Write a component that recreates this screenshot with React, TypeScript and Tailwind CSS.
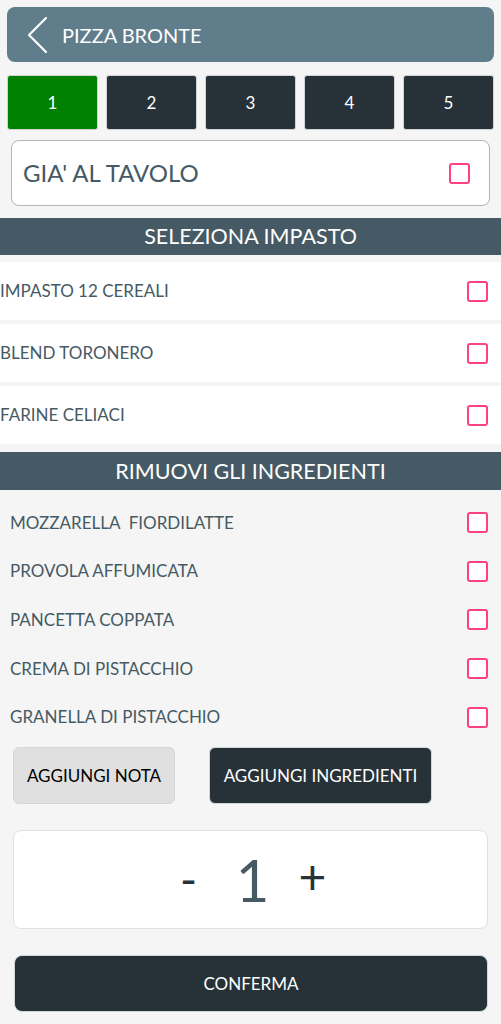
const impasti = ["IMPASTO 12 CEREALI", "BLEND TORONERO", "FARINE CELIACI"];
const ingredienti = [
    "MOZZARELLA  FIORDILATTE",
    "PROVOLA AFFUMICATA",
    "PANCETTA COPPATA",
    "CREMA DI PISTACCHIO",
    "GRANELLA DI PISTACCHIO",
];

function Check() {
    return <span className="block w-[21px] h-[21px] border-2 border-[#ff4081] rounded-[3px] bg-white shrink-0" />;
}

export default function App() {
    return (
        <div className="min-h-[1024px] w-[501px] bg-[#f5f5f5] font-['Lato',sans-serif] text-[#455a64] pt-[7px]">
            {/* Header */}
            <div className="mx-[7px] h-[55px] rounded-[8px] bg-[#607d8b] flex items-center text-white">
                <svg width="22" height="38" viewBox="0 0 22 38" className="ml-[20px]" fill="none" stroke="white" strokeWidth="2.2" strokeLinecap="round" strokeLinejoin="round">
                    <polyline points="19,2 2,19 19,36" />
                </svg>
                <span className="text-[20px] ml-[13px] whitespace-pre">PIZZA BRONTE</span>
            </div>

            {/* Tabs */}
            <div className="mx-[7px] mt-[13px] grid grid-cols-5 gap-[8px]">
                {[1, 2, 3, 4, 5].map((n) => (
                    <div
                        key={n}
                        className={`h-[55px] rounded-[3px] border border-[#d0d4d6] flex items-center justify-center text-white text-[17px] ${n === 1 ? "bg-[#008000]" : "bg-[#263238]"}`}
                    >
                        {n}
                    </div>
                ))}
            </div>

            {/* Già al tavolo */}
            <div className="mx-[11px] mt-[10px] h-[66px] bg-white border border-[#b5b5b5] rounded-[8px] flex items-center justify-between pl-[11px] pr-[19px]">
                <span className="text-[24px]">GIA' AL TAVOLO</span>
                <Check />
            </div>

            {/* Seleziona impasto */}
            <div className="mt-[12px] h-[37px] bg-[#455a64] text-white text-[21.5px] flex items-center justify-center">
                SELEZIONA IMPASTO
            </div>
            <div className="flex flex-col gap-[4px] pt-[7px] pb-[8px]">
                {impasti.map((t) => (
                    <div key={t} className="h-[58px] bg-white flex items-center justify-between pr-[13px]">
                        <span className="text-[17px]">{t}</span>
                        <Check />
                    </div>
                ))}
            </div>

            {/* Rimuovi ingredienti */}
            <div className="h-[38px] bg-[#455a64] text-white text-[21.5px] flex items-center justify-center">
                RIMUOVI GLI INGREDIENTI
            </div>
            <div className="flex flex-col pt-[8px]">
                {ingredienti.map((t) => (
                    <div key={t} className="h-[48.7px] flex items-center justify-between pl-[10px] pr-[13px]">
                        <span className="text-[17px] whitespace-pre">{t}</span>
                        <Check />
                    </div>
                ))}
            </div>

            {/* Actions */}
            <div className="flex items-center gap-[34px] px-[13px] mt-[6px]">
                <button className="w-[162px] h-[57px] rounded-[6px] bg-[#e0e0e0] border border-[#d6d6d6] text-black text-[17px]">
                    AGGIUNGI NOTA
                </button>
                <button className="w-[223px] h-[57px] rounded-[6px] bg-[#263238] border border-[#cfd8dc] text-white text-[17px]">
                    AGGIUNGI INGREDIENTI
                </button>
            </div>

            {/* Quantity */}
            <div className="mx-[13px] mt-[26px] h-[99px] bg-white border border-[#e0e0e0] rounded-[8px] flex items-center justify-center pl-[4px]">
                <span className="w-[60px] text-center text-[46px] text-[#263238] leading-none -mt-[2px] pr-[8px]">-</span>
                <span className="w-[60px] text-center text-[58px] leading-none">1</span>
                <span className="w-[60px] text-center text-[48px] text-[#263238] leading-none -mt-[8px]">+</span>
            </div>

            {/* Confirm */}
            <button className="mx-[14px] mt-[26px] w-[474px] h-[57px] rounded-[8px] bg-[#263238] border border-[#cfd8dc] text-white text-[17px] flex items-center justify-center">
                CONFERMA
            </button>
        </div>
    );
}
